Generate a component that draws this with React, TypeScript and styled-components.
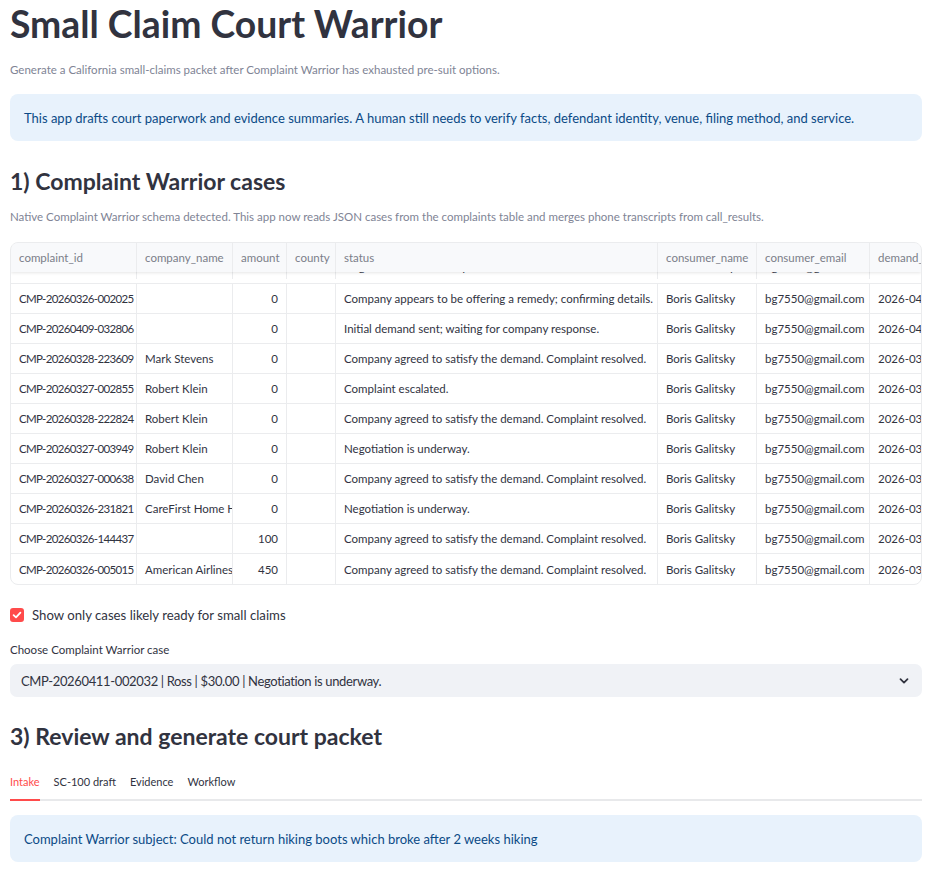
import { FC } from 'react';
import styled, { createGlobalStyle } from 'styled-components';

const colors = {
  text: '#31333f',
  muted: '#808495',
  infoBg: '#e8f2fc',
  infoText: '#0b4a86',
  line: '#ebecee',
  headBg: '#f8f9fb',
  headText: '#7b7e89',
  field: '#f0f2f6',
  red: '#ff4b4b',
};

const GlobalStyle = createGlobalStyle`
  body {
    margin: 0;
    background: #ffffff;
    font-family: Lato, 'Liberation Sans', sans-serif;
    color: ${colors.text};
  }
`;

const StyledPage = styled.main`
  padding: 0 9px 0 10px;
  width: 912px;
`;

const StyledTitle = styled.h1`
  margin: 0;
  font-size: 37.3px;
  line-height: 48px;
  font-weight: 700;
  color: ${colors.text};
`;

const StyledCaption = styled.p<{ top: number }>`
  margin: ${(p) => p.top}px 0 0;
  font-size: 11.5px;
  line-height: 16px;
  color: ${colors.muted};
`;

const StyledInfo = styled.div<{ top: number }>`
  margin-top: ${(p) => p.top}px;
  height: 47px;
  display: flex;
  align-items: center;
  padding: 0 14px;
  box-sizing: border-box;
  border-radius: 8px;
  background: ${colors.infoBg};
  color: ${colors.infoText};
  font-size: 13px;
`;

const StyledHeading = styled.h2<{ top: number }>`
  margin: ${(p) => p.top}px 0 0;
  font-size: 23px;
  line-height: 32px;
  font-weight: 700;
  color: ${colors.text};
`;

const StyledTable = styled.div`
  margin-top: 17px;
  border: 1px solid ${colors.line};
  border-radius: 8px;
  overflow: hidden;
  font-size: 11.5px;
`;

const columns = '126px 96px 54px 49px 322px 99px 113px 120px';

const StyledHeadRow = styled.div`
  position: relative;
  z-index: 1;
  display: grid;
  grid-template-columns: ${columns};
  height: 29px;
  background: ${colors.headBg};
  box-shadow: 0 1px 3px rgba(0, 0, 0, 0.1);
  color: ${colors.headText};
`;

const StyledViewport = styled.div`
  height: 312px;
  overflow: hidden;
`;

const StyledRows = styled.div`
  margin-top: -19px;
`;

const StyledRow = styled.div`
  display: grid;
  grid-template-columns: ${columns};
  height: 30px;
  border-bottom: 1px solid ${colors.line};
  box-sizing: border-box;
  &:first-child {
    height: 31px;
    padding-bottom: 4px;
  }
  &:last-child {
    border-bottom: none;
  }
`;

const StyledCell = styled.div<{ $right?: boolean; $tight?: boolean }>`
  display: flex;
  align-items: center;
  justify-content: ${(p) => (p.$right ? 'flex-end' : 'flex-start')};
  padding: 0 8px;
  border-right: 1px solid ${colors.line};
  white-space: nowrap;
  overflow: hidden;
  letter-spacing: ${(p) => (p.$tight ? '-0.65px' : 'normal')};
`;

const StyledCheckRow = styled.label`
  margin-top: 20px;
  display: flex;
  align-items: center;
  gap: 8px;
  height: 20px;
  font-size: 13.2px;
`;

const StyledCheckBox = styled.span`
  width: 14px;
  height: 14px;
  border-radius: 3px;
  background: ${colors.red};
  display: flex;
  align-items: center;
  justify-content: center;
`;

const StyledFieldLabel = styled.div`
  margin-top: 17px;
  font-size: 11.5px;
  line-height: 16px;
`;

const StyledSelect = styled.div`
  margin-top: 6px;
  height: 33px;
  border-radius: 7px;
  background: ${colors.field};
  display: flex;
  align-items: center;
  justify-content: space-between;
  padding: 0 12px 0 11px;
  font-size: 13px;
  letter-spacing: -0.35px;
`;

const StyledTabs = styled.div`
  margin-top: 14px;
  display: flex;
  gap: 14px;
  border-bottom: 2px solid #e8e9eb;
`;

const StyledTab = styled.div<{ $active?: boolean }>`
  padding: 8px 0 9px;
  margin-bottom: -2px;
  font-size: 11px;
  line-height: 16px;
  color: ${(p) => (p.$active ? colors.red : colors.text)};
  border-bottom: 2px solid ${(p) => (p.$active ? colors.red : 'transparent')};
`;

const headers = [
  'complaint_id',
  'company_name',
  'amount',
  'county',
  'status',
  'consumer_name',
  'consumer_email',
  'demand_sent_at',
];

const AGREED = 'Company agreed to satisfy the demand. Complaint resolved.';
const NEGOTIATION = 'Negotiation is underway.';

const rows = [
  ['CMP-20260411-002032', 'Ross', '30', NEGOTIATION, '2026-04-11'],
  ['CMP-20260326-002025', '', '0', 'Company appears to be offering a remedy; confirming details.', '2026-04-02'],
  ['CMP-20260409-032806', '', '0', 'Initial demand sent; waiting for company response.', '2026-04-09'],
  ['CMP-20260328-223609', 'Mark Stevens', '0', AGREED, '2026-03-28'],
  ['CMP-20260327-002855', 'Robert Klein', '0', 'Complaint escalated.', '2026-03-27'],
  ['CMP-20260328-222824', 'Robert Klein', '0', AGREED, '2026-03-28'],
  ['CMP-20260327-003949', 'Robert Klein', '0', NEGOTIATION, '2026-03-27'],
  ['CMP-20260327-000638', 'David Chen', '0', AGREED, '2026-03-27'],
  ['CMP-20260326-231821', 'CareFirst Home Health', '0', NEGOTIATION, '2026-03-26'],
  ['CMP-20260326-144437', '', '100', AGREED, '2026-03-26'],
  ['CMP-20260326-005015', 'American Airlines', '450', AGREED, '2026-03-26'],
];

const CasesTable: FC = () => (
  <StyledTable>
    <StyledHeadRow>
      {headers.map((h) => (
        <StyledCell key={h}>{h}</StyledCell>
      ))}
    </StyledHeadRow>
    <StyledViewport>
      <StyledRows>
        {rows.map(([id, company, amount, status, date]) => (
          <StyledRow key={id}>
            <StyledCell $tight>{id}</StyledCell>
            <StyledCell>{company}</StyledCell>
            <StyledCell $right>{amount}</StyledCell>
            <StyledCell />
            <StyledCell>{status}</StyledCell>
            <StyledCell>Boris Galitsky</StyledCell>
            <StyledCell>bg7550@gmail.com</StyledCell>
            <StyledCell>{date}</StyledCell>
          </StyledRow>
        ))}
      </StyledRows>
    </StyledViewport>
  </StyledTable>
);

export default function App() {
  return (
    <StyledPage>
      <GlobalStyle />
      <StyledTitle>Small Claim Court Warrior</StyledTitle>
      <StyledCaption top={14}>
        Generate a California small-claims packet after Complaint Warrior has exhausted pre-suit options.
      </StyledCaption>
      <StyledInfo top={16}>
        This app drafts court paperwork and evidence summaries. A human still needs to verify facts, defendant
        identity, venue, filing method, and service.
      </StyledInfo>
      <StyledHeading top={24}>1) Complaint Warrior cases</StyledHeading>
      <StyledCaption top={12}>
        Native Complaint Warrior schema detected. This app now reads JSON cases from the complaints table and merges
        phone transcripts from call_results.
      </StyledCaption>
      <CasesTable />
      <StyledCheckRow>
        <StyledCheckBox>
          <svg width="10" height="10" viewBox="0 0 10 10">
            <path d="M1.6 5.2 L4 7.4 L8.4 2.6" fill="none" stroke="#fff" strokeWidth="1.8" strokeLinecap="round" strokeLinejoin="round" />
          </svg>
        </StyledCheckBox>
        Show only cases likely ready for small claims
      </StyledCheckRow>
      <StyledFieldLabel>Choose Complaint Warrior case</StyledFieldLabel>
      <StyledSelect>
        <span>CMP-20260411-002032 | Ross | $30.00 | Negotiation is underway.</span>
        <svg width="12" height="12" viewBox="0 0 12 12">
          <path d="M2.5 4.2 L6 7.6 L9.5 4.2" fill="none" stroke={colors.text} strokeWidth="1.8" strokeLinecap="round" strokeLinejoin="round" />
        </svg>
      </StyledSelect>
      <StyledHeading top={23}>3) Review and generate court packet</StyledHeading>
      <StyledTabs>
        <StyledTab $active>Intake</StyledTab>
        <StyledTab>SC-100 draft</StyledTab>
        <StyledTab>Evidence</StyledTab>
        <StyledTab>Workflow</StyledTab>
      </StyledTabs>
      <StyledInfo top={14}>Complaint Warrior subject: Could not return hiking boots which broke after 2 weeks hiking</StyledInfo>
    </StyledPage>
  );
}
